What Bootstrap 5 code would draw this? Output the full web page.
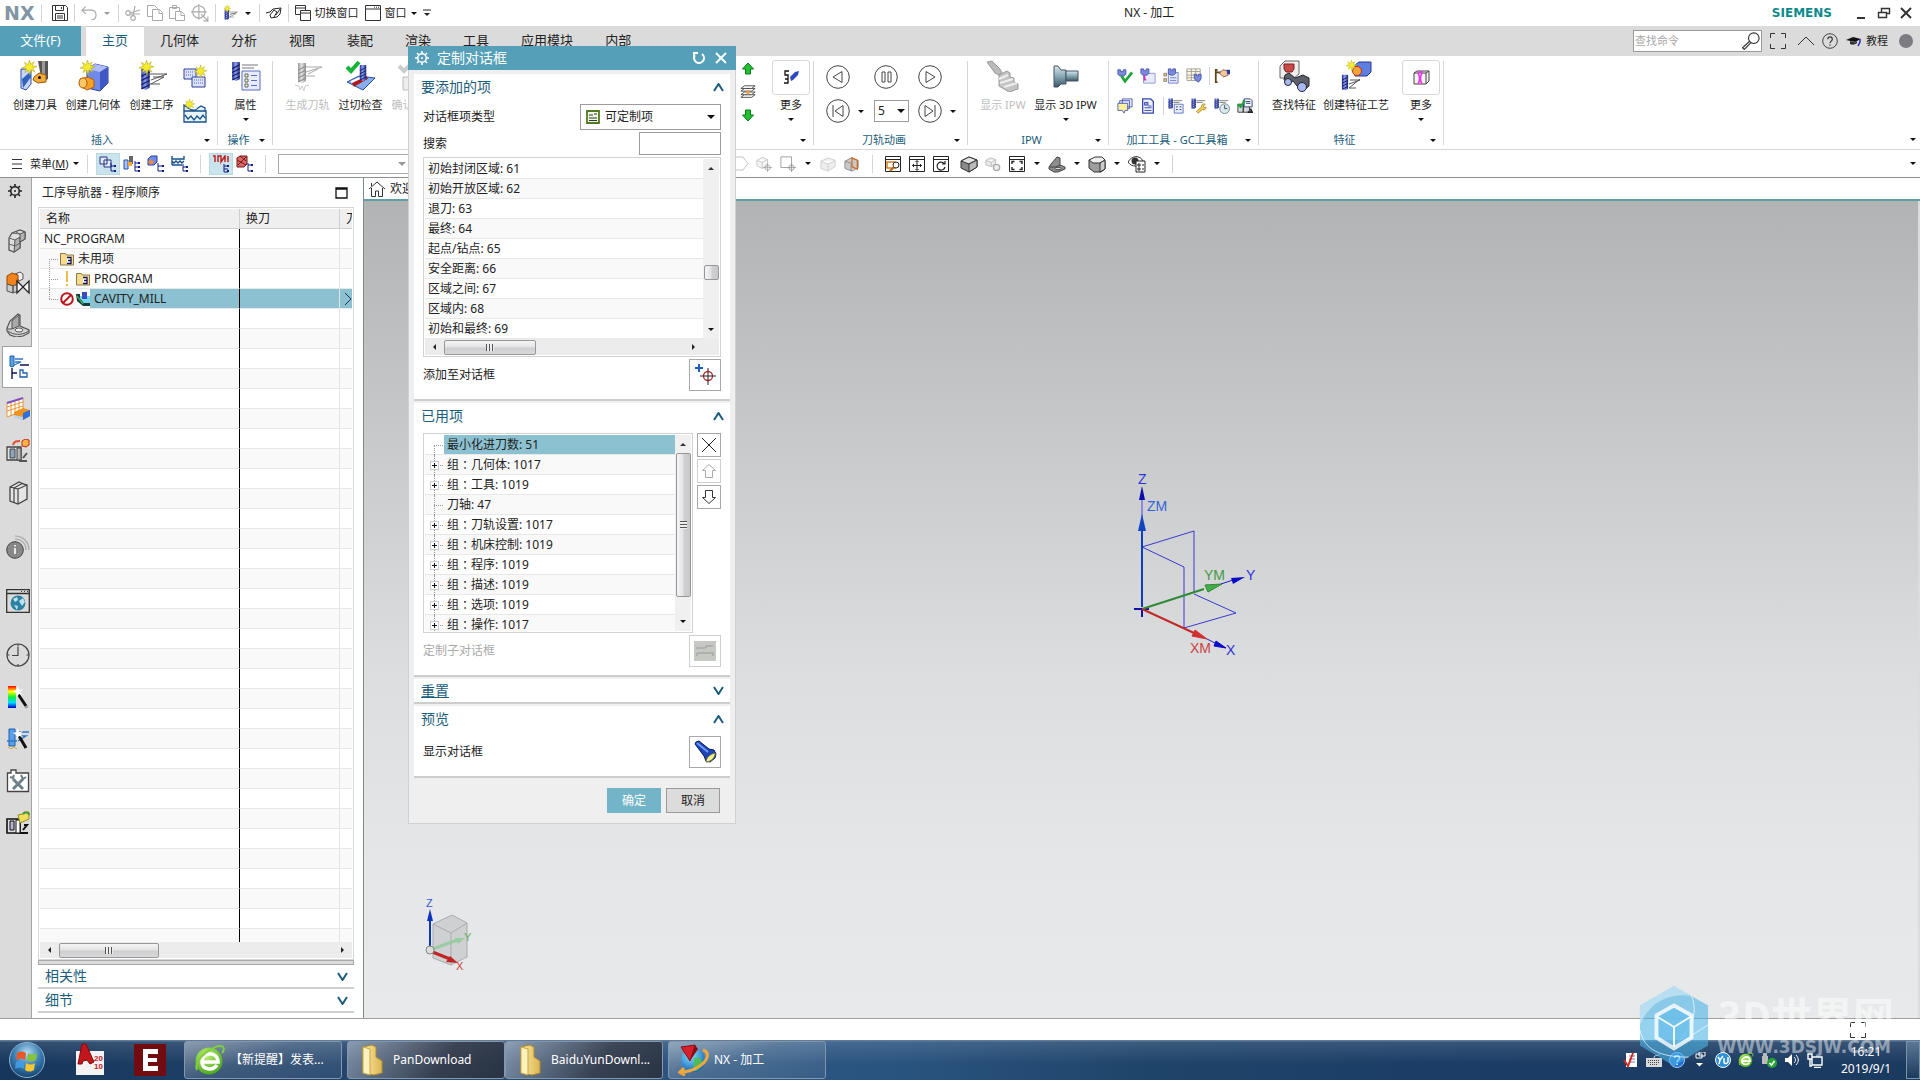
<!DOCTYPE html>
<html lang="zh-CN">
<head>
<meta charset="utf-8">
<meta name="viewport" content="width=device-width, initial-scale=1">
<title>NX - 加工</title>
<link href="https://cdn.jsdelivr.net/npm/bootstrap@5.3.0/dist/css/bootstrap.min.css" rel="stylesheet">
<style>
:root{--teal:#559fb8;--ink:#1b5e7b;--pick:#8bc1d0;--line:#d6d6d6}
body{font-family:"Noto Sans","Noto Sans CJK SC",sans-serif;font-size:12px;line-height:20px;color:#222;background:#fff;overflow:hidden}
button,input,select{font:inherit;color:inherit}
.btn{--bs-btn-padding-x:0;--bs-btn-padding-y:0;--bs-btn-font-size:12px;--bs-btn-line-height:16px;--bs-btn-border-width:0;--bs-btn-border-radius:0;--bs-btn-color:#222;--bs-btn-disabled-color:#bdbdbd;--bs-btn-disabled-opacity:1;font-family:inherit}
svg{display:block;flex:none}
.i14{width:14px;height:14px}.i16{width:16px;height:16px}.i18{width:18px;height:18px}.i24{width:24px;height:24px}.i32{width:32px;height:32px}
.fs11{font-size:11px;line-height:16px}
.tri{width:0;height:0;border:3px solid transparent;border-top-color:#111;border-bottom:0;flex:none}
.tri.up{border:3px solid transparent;border-bottom-color:#333;border-top:0}
.tri.lf{border:3px solid transparent;border-right-color:#222;border-left:0}
.tri.rt{border:3px solid transparent;border-left-color:#222;border-right:0}
.tri.dim{border-top-color:#999}
.vsep{width:1px;height:18px;background:#d4d4d4;flex:none}
.titlebar,.tabrow,.ribbon,.selbar,.statusbar,.taskbar{flex-shrink:0}
/* title bar */
.titlebar{height:26px;gap:6px}
.titlebar > .tri{margin:0 2px 0 1px}
.nxlogo{font:bold 19px/26px "DejaVu Sans",sans-serif;color:#8195a5}
.siemens{font:bold 12px/28px "DejaVu Sans",sans-serif;color:#0d8a8c}
/* ribbon tabs */
.tabrow{height:30px;background:#dbdbdb}
.tabrow .nav-link{font-size:13px;line-height:28px;padding:0 16px 2px;color:#222;border-radius:0}
.tabrow .nav-link.filetab{background:var(--teal);color:#fff;width:81px;text-align:center;padding:0 0 2px;margin-right:5px}
.tabrow .nav-link.active{background:#fff;color:var(--ink);border-top:1px solid #ccc;line-height:27px}
.findbox{width:129px;height:22px;border:1px solid #9a9a9a;background:#fff}
.findbox input{width:104px;border:0;background:none;padding:0 1px;outline:0}
.findbox input::placeholder{color:#a8a8a8}
/* ribbon */
.ribbon{height:94px;border-bottom:1px solid var(--line)}
.rgroup{position:relative;display:flex;flex-direction:column;padding-top:4px}
.rgroup::after{content:"";position:absolute;right:0;top:5px;bottom:4px;width:1px;background:var(--line)}
.rbody{flex:1;display:flex;align-items:flex-start}
.rfoot{display:flex;align-items:center;height:18px;padding-right:8px;color:var(--ink)}
.rfoot span:first-child{flex:1;text-align:center}
.rbtn{display:flex;flex-direction:column;align-items:center;font-size:11px;line-height:16px;white-space:nowrap;height:68px}
.rbtn .cap{margin-top:5px}
.rbtn .tri{margin-top:5px}
.morebox{width:38px;height:35px;border:1px solid #d8d8d8;border-radius:3px;display:flex;align-items:center;justify-content:center}
.rbtn .morebox + .cap{margin-top:2px}
.stackcol{gap:10px;padding:5px 0 0 4px}
.layercol{gap:8px;padding-top:2px}
.g-ins{width:218px}.g-op{width:55px}.g-path{width:541px}.g-anim{width:154px}.g-ipw{width:141px}.g-gc{width:150px}.g-feat{width:185px}
.anim{display:grid;grid-template-columns:48px 44px 44px;align-content:start;align-items:center;row-gap:10px;padding:5px 0 0 12px}
.anim select{width:35px;height:22px}
.cell{width:23px;height:24px;display:flex;align-items:center;justify-content:center;flex:none}
.plainselect{appearance:none;border:1px solid #9c9c9c;border-radius:0;background:#fff;padding:0 3px;outline:0}
.selwrap{position:relative}
.selwrap .tri{position:absolute;right:8px;top:50%;margin-top:-2px;border-width:4px 4px 0;pointer-events:none}
.anim .selwrap .tri{right:4px}
.anim .selwrap{width:35px}
.selwrap .kind + .kindico + .tri{right:6px}
/* selection bar */
.selbar{height:28px;border-bottom:1px solid #8f8f8f}
.tcell{width:24px;height:22px;display:flex;align-items:center;justify-content:center;flex:none}
.tarr{width:15px;display:flex;justify-content:center;flex:none}
.tarr + .tcell{margin-left:1px}
.tcell.on{background:#cbe4eb;border:1px solid #b9dae4}
.selleft{width:728px}
.filterbox{height:20px;width:136px;border:1px solid #aaa}
/* work area */
.workarea{flex:1 1 0;min-height:0}
.sidebar{width:32px;background:#dbdbdb;border-right:1px solid #a2a2a2}
.sidebar .btn{width:32px;height:42px;display:flex;align-items:center;justify-content:center;padding-left:4px;flex-shrink:0}
.sidebar .btn.gearbtn{height:26px;margin-bottom:16px;padding:0;width:30px}
.sidebar .btn.on{background:#fff;border:1px solid #a2a2a2;border-right:0;width:30px;margin-left:2px;padding-left:2px}
.sidebar .far{margin-top:12px}
.navpanel{width:332px;border-right:1px solid #7e8a8d;padding:0 9px 5px 6px}
.navhead{padding:5px 6px 4px 4px}
.navframe{border:1px solid #d6d6d6;padding:1px;flex:1 1 0;min-height:0}
.navscroll{flex:1 1 0;min-height:0;overflow:hidden}
.navtable{table-layout:fixed;width:312px;margin:0;border-collapse:separate;border-spacing:0}
.navtable th{height:20px;font-weight:400;background:#efefef;border-bottom:1px solid #cfcfcf;border-right:1px solid #cfcfcf;padding:0 6px;line-height:19px;overflow:hidden;white-space:nowrap}
.navtable td{height:20px;padding:0;border-bottom:1px solid #e8e8e8;border-right:1px solid #e4e4e4;line-height:19px;overflow:hidden;white-space:nowrap}
.navtable td:first-child{border-right:1px solid #000}
.navtable td:last-child,.navtable th:last-child{border-right:0}
.navtable tr:nth-child(even) td{background:#f9f9f9}
.navtable tr.picked td:not(:first-child),.picklabel{background:var(--pick)!important}
.twig{width:11px;height:19px;position:relative;margin-left:9px;flex:none}
.twig::before{content:"";position:absolute;left:0;top:0;bottom:0;border-left:1px dotted #999}
.twig::after{content:"";position:absolute;left:0;top:10px;width:9px;border-top:1px dotted #999}
.twig.first::before{top:10px}.twig.last::before{bottom:9px}
.opicons{display:flex;gap:2px}
.hbar{height:16px;background:#ececec;display:flex;align-items:center;flex-shrink:0}
.thumb{border:1px solid #979797;border-radius:2px;background:linear-gradient(#f5f5f5,#e4e4e6 45%,#cfcfd2 55%,#d9d9dc);display:flex;align-items:center;justify-content:center}
.thumb.v{background:linear-gradient(90deg,#f5f5f5,#e4e4e6 45%,#cfcfd2 55%,#c9c9cc)}
.grip{width:8px;height:7px;background:repeating-linear-gradient(90deg,#555 0 1px,#eee 1px 3px)}
.thumb.v .grip{width:7px;height:8px;background:repeating-linear-gradient(#555 0 1px,#eee 1px 3px)}
.splitbar{height:5px;background:#dcdcdc;border:1px solid #a8a8a8;flex-shrink:0}
.fold{height:24px;flex-shrink:0;border:0;border-bottom:2px solid #d0d0d0;background:none;color:var(--ink);font-size:14px;line-height:20px;display:flex;justify-content:space-between;align-items:center;padding:0 6px 0 7px}
.chev{width:11px;height:9px;fill:none;stroke:var(--ink);stroke-width:2}
/* graphics window */
.viewtab{height:23px;flex-shrink:0;border-bottom:2px solid #5f9ea7;background:#fff}
.canvas3d{background:linear-gradient(#b2b3b5,#c9cbcc 32%,#dcdddf 57%,#e4e6e7 80%,#e7e9ea);border-right:2px solid #dadcdd}
.triad{position:absolute;left:768px;top:256px}
.viewcube{position:absolute;left:57px;bottom:46px}
.axis{font-family:"Liberation Sans",sans-serif}
/* dialog */
.dlg{position:absolute;left:408px;top:46px;width:328px;background:#efefef;border:1px solid #cfd2d3;border-top:0;z-index:5}
.dlgtitle{height:24px;margin:0 -1px;background:var(--teal);color:#fff;font-size:14px;padding:0 8px 0 7px}
.sect{margin:2px 5px 0;background:#fff;border-bottom:2px solid #cdcdcd;padding:0 9px 8px}
.sect.topmost{margin-top:4px}
.sect.closed{padding-bottom:0}
.secthead{height:26px;width:calc(100% + 5px);margin-left:-2px;display:flex;justify-content:space-between;align-items:center;border:0;background:none;color:var(--ink);font-size:14px;padding:0}
.closed .secthead{height:23px}
.lrow{display:flex;justify-content:space-between;align-items:center}
.lrow.kindrow{padding:4px 0 2px}
.kind{width:141px;height:26px;padding-left:24px}
.kindico{position:absolute;left:6px;top:6px;pointer-events:none}
.term{width:82px;height:23px;border:1px solid #9c9c9c;outline:0;padding:0 4px}
.listframe{border:1px solid #d2d2d2;padding:1px;height:200px}
.itemlist{margin:2px 0}
.itemlist > .d-flex{height:180px}
.treewrap{padding-top:4px;margin-bottom:2px}
.rows{list-style:none;margin:0;padding:0;overflow:hidden}
.rows li{height:20px;line-height:19px;border-bottom:1px solid #e8e8e8;padding-left:3px;white-space:nowrap;display:flex}
.rows li:nth-child(even){background:#f9f9f9}
.rows .picklabel{padding-left:3px}
.tree .node{margin-right:3px}
.tree .node.first{margin-right:0}
.co{font-family:"Noto Sans CJK TC",sans-serif}
.vbar{width:16px;background:#f0f0f0;display:flex;flex-direction:column;align-items:center;flex:none}
.sqbtn{width:32px;height:32px;border:1px solid #a8a8a8!important;display:flex;align-items:center;justify-content:center;background:#fff}
.sqbtn.sm24{width:24px;height:24px}
.sqbtn:disabled{border-color:#cfcfcf!important;background:#fff}
.node{position:relative;width:10px;height:20px;margin:0 0 0 6px;flex:none}
.node::before{content:"";position:absolute;left:0;top:0;bottom:0;border-left:1px dotted #999}
.node::after{content:"";position:absolute;left:0;top:10px;width:9px;border-top:1px dotted #999}
.node.first::before{top:10px}
.plus{position:absolute;left:-4px;top:6px;z-index:1;width:9px;height:9px;background:#fff;border:1px solid #ccc}
.plus::before,.plus::after{content:"";position:absolute;background:#111}
.plus::before{left:1px;top:3px;width:5px;height:1px}.plus::after{left:3px;top:1px;width:1px;height:5px}
.dlgfoot{padding:10px 15px;gap:5px}
.okbtn{width:54px;height:25px;background:#73b4c8!important;color:#fff!important}
.nobtn{width:54px;height:25px;background:#dcdcdc!important;border:1px solid #9b9b9b!important}
/* status and task bars */
.statusbar{height:22px;border-top:1px solid #9f9f9f;padding-right:54px}
.taskbar{height:40px;background:linear-gradient(#5f7c9b 0 1px,rgba(255,255,255,.12) 2px,rgba(255,255,255,0) 60%),linear-gradient(90deg,#16365b,#24466e 20%,#2d5680 38%,#2a5480 46%,#1f4469 60%,#1b3d66 75%,#1b3a60);color:#fff}
.task{width:158px;height:38px;flex-shrink:0;border:1px solid #8497ad;border-radius:3px;background:linear-gradient(160deg,rgba(255,255,255,.42),rgba(255,255,255,.14) 45%,rgba(255,255,255,.05));color:#fff!important;display:flex;align-items:center;text-align:left;padding-left:9px}
.task svg{width:32px;height:32px;margin-right:4px}
.task.gapped{margin-left:5px}
.task.dark{background:linear-gradient(125deg,rgba(255,255,255,.4),rgba(60,60,70,.75) 60%,rgba(40,45,55,.8))}
.tasks{margin-left:18px}
.ticon{width:23px;display:flex;justify-content:center}
.clock{width:80px;line-height:17px;text-align:center}
.desk{width:14px;height:38px;border:1px solid #7b93ad;background:linear-gradient(#5d7896,#1b3a5c)}
.wmark{position:absolute;right:26px;bottom:13px;z-index:9;pointer-events:none;color:#fff}
.wmark .big{font:bold 41px/42px "Noto Sans CJK SC",sans-serif;opacity:.5}
.wmark .url{font:bold 17px/24px "DejaVu Sans",sans-serif;opacity:.45}
</style>
</head>
<body>
<svg width="0" height="0" class="position-absolute" aria-hidden="true">
<defs>
<linearGradient id="gm" x1="0" x2="1"><stop offset="0" stop-color="#24309a"/><stop offset=".45" stop-color="#8fa2f0"/><stop offset="1" stop-color="#1c2678"/></linearGradient>
<linearGradient id="gg" x1="0" x2="1"><stop offset="0" stop-color="#9a9a9a"/><stop offset=".45" stop-color="#e2e2e2"/><stop offset="1" stop-color="#909090"/></linearGradient>
<linearGradient id="gs" x1="0" x2="0" y1="0" y2="1"><stop offset="0" stop-color="#d8e6ec"/><stop offset=".5" stop-color="#86a7b5"/><stop offset="1" stop-color="#3a5564"/></linearGradient>
<linearGradient id="rainbow" x1="0" x2="0" y1="0" y2="1"><stop offset="0" stop-color="#f00"/><stop offset=".25" stop-color="#ff0"/><stop offset=".5" stop-color="#1e3"/><stop offset=".75" stop-color="#0df"/><stop offset="1" stop-color="#00c"/></linearGradient>
<linearGradient id="gf" x1="0" x2="1"><stop offset="0" stop-color="#fbe9a4"/><stop offset="1" stop-color="#dcb650"/></linearGradient>
<radialGradient id="orb" cx=".5" cy=".3" r=".75"><stop offset="0" stop-color="#b7dcf3"/><stop offset=".5" stop-color="#3c7fb4"/><stop offset="1" stop-color="#0e3c68"/></radialGradient>
<radialGradient id="ball" cx=".4" cy=".3" r=".75"><stop offset="0" stop-color="#8de0ff"/><stop offset="1" stop-color="#0a62b4"/></radialGradient>
<radialGradient id="grn" cx=".4" cy=".3" r=".8"><stop offset="0" stop-color="#c3ef72"/><stop offset="1" stop-color="#3d9f16"/></radialGradient>
</defs>
<symbol id="star" viewBox="0 0 16 16"><path d="M8 0l1.3 4.4L13 2l-2 4 5 1-4.700 1.700L14 13l-4.300-2.500L8.500 16 7 10.800 3 13.500 5 9.500 0 8.500l4.500-2L2.500 2.500 6.500 5z" fill="#f6ec2e" stroke="#b5a81c" stroke-width=".6"/></symbol>
<symbol id="mill" viewBox="0 0 10 22"><path d="M1 1h8v18l-4 2-4-2z" fill="url(#gm)"/><path d="M1 8l8-4M1 12l8-4M1 16l8-4M1 20l8-4" stroke="#151d66" stroke-width="1.200"/></symbol>
<symbol id="millg" viewBox="0 0 10 22"><path d="M1 1h8v18l-4 2-4-2z" fill="url(#gg)"/><path d="M1 8l8-4M1 12l8-4M1 16l8-4M1 20l8-4" stroke="#888"/></symbol>
<symbol id="i-tool" viewBox="0 0 32 32"><path d="M19 1h10v18l-6 3z" fill="#555"/><path d="M23 1h3v18h-3z" fill="#999"/><path d="M15 17l5-4 7 2v7l-8 1-5-3z" fill="#f3a93c" stroke="#9a5b0c"/><circle cx="20.500" cy="17.500" r="1.500" fill="#111"/><path d="M2 9h10v15l-5 6-5-2z" fill="#c9d6ff" stroke="#2b4da8"/><path d="M3 19l9-8v6L4 28z" fill="#2f63c0"/><use href="#star" x="3" y="0" width="15" height="15"/></symbol>
<symbol id="i-geom" viewBox="0 0 32 32"><path d="M10 9l8-5 13 3v16l-8 8-13-3z" fill="#6f8bea" stroke="#2a3f9c"/><path d="M10 9l8-5 13 3-8 5z" fill="#aebdf8"/><path d="M23 12v18l8-7V7z" fill="#4058c4"/><path d="M3 19l8-2 6 3v7l-7 3-7-4z" fill="#f5a22c" stroke="#b05b06"/><ellipse cx="6" cy="23" rx="4" ry="5" fill="#ffc765" stroke="#b05b06"/><use href="#star" x="3" y="0" width="15" height="15"/></symbol>
<symbol id="i-op" viewBox="0 0 32 32"><use href="#mill" x="4" y="8" width="11" height="23"/><path d="M14 14h17L15 20M17 17h11M15 24l13-7M14 24h10" stroke="#555" fill="none"/><use href="#star" x="3" y="0" width="15" height="15"/></symbol>
<symbol id="i-tile" viewBox="0 0 24 24"><path d="M1 4h12v10H1z" fill="#dbe2fb" stroke="#2b3c96"/><path d="M9 12h13v10H9z" fill="#dbe2fb" stroke="#2b3c96"/><path d="M3 7h8M3 10h8M11 15h9M11 18h9" stroke="#5668c4" stroke-dasharray="1 1"/><use href="#star" x="11" y="0" width="13" height="13"/></symbol>
<symbol id="i-wave" viewBox="0 0 24 24"><path d="M1 12V6l4 3c4 3 8 3 10 0l3-2 4 2v3" fill="#e8f4fb" stroke="#16508a" stroke-width="1.300"/><path d="M1 12h22v11H1zM2 16l3 4 3-3 3 4 3-4 3 3 3-4 2 3" fill="#e8f4fb" stroke="#16508a" stroke-width="1.300"/><use href="#star" x="1" y="0" width="11" height="11"/></symbol>
<symbol id="i-prop" viewBox="0 0 32 32"><use href="#mill" x="1" y="1" width="10" height="21"/><path d="M12 5h16M12 8h12" stroke="#777"/><path d="M12 11h18v19H12z" fill="#e8ecff" stroke="#5a6cc0"/><path d="M15 14h3v3h-3zM15 19h3v3h-3zM15 24h3v3h-3z" fill="#fff5b8" stroke="#666"/><path d="M21 15.500h6M21 20.500h6M21 25.500h6" stroke="#5a6cc0"/></symbol>
<symbol id="i-gen" viewBox="0 0 32 32"><use href="#millg" x="5" y="2" width="10" height="22"/><path d="M14 7h16L14 12M16 14l10-5M14 16h9" stroke="#aaa" fill="none"/><path d="M3 25l4 1 1 4 2-4 2 5 1-5 4-1" stroke="#ccc" fill="none"/></symbol>
<symbol id="i-check" viewBox="0 0 32 32"><path d="M2 22l12-6 16 2-12 12z" fill="#86aef0" stroke="#2a50a0"/><path d="M8 25l14-8" stroke="#b01a1a" stroke-width="4"/><path d="M6 22l14-6" stroke="#fff" stroke-width="2"/><use href="#mill" x="14" y="4" width="8" height="18"/><path d="M2 7l4 4 8-9" stroke="#16b438" stroke-width="4" fill="none"/></symbol>
<symbol id="i-conf" viewBox="0 0 32 32"><path d="M1 6l5 5 9-9" stroke="#ccc" stroke-width="4" fill="none"/><path d="M5 17h14v13H5z" fill="#eee" stroke="#bbb"/></symbol>
<symbol id="i-upg" viewBox="0 0 14 14"><path d="M7 1l5.500 6H9.500v5h-5V7H1.500z" fill="#1fc032" stroke="#0d7a1c"/></symbol>
<symbol id="i-dng" viewBox="0 0 14 14"><path d="M7 13L1.500 7h3V2h5v5h3z" fill="#1fc032" stroke="#0d7a1c"/></symbol>
<symbol id="i-stack" viewBox="0 0 18 18"><g fill="#fff" stroke="#444"><path d="M1 15l4-3h12l-4 3z"/><path d="M1 12l4-3h12l-4 3z"/><path d="M1 8l4-3h12l-4 3z"/><path d="M1 5l4-3h12l-4 3z"/></g><path d="M6 9l3 3 3-3-3-2z" fill="#e8a04a"/></symbol>
<symbol id="i-more1" viewBox="0 0 18 18"><path d="M7 2H3v4h3v4H3M6 10v4H2" stroke="#111" stroke-width="1.300" fill="none"/><path d="M8 8l5-5 4-1-1 4-5 5-2 1z" fill="#2d49b8"/></symbol>
<symbol id="i-cback" viewBox="0 0 24 24"><circle cx="12" cy="12" r="11.300" fill="#fff" stroke="#444"/><path d="M16 6.500v11L7 12z" fill="none" stroke="#444"/></symbol>
<symbol id="i-cpause" viewBox="0 0 24 24"><circle cx="12" cy="12" r="11.300" fill="#fff" stroke="#444"/><path d="M8 7h3v10H8zM14 7h3v10h-3z" fill="none" stroke="#444"/></symbol>
<symbol id="i-cplay" viewBox="0 0 24 24"><circle cx="12" cy="12" r="11.300" fill="#fff" stroke="#444"/><path d="M8 6.500v11l9-5.500z" fill="none" stroke="#444"/></symbol>
<symbol id="i-cfirst" viewBox="0 0 24 24"><circle cx="12" cy="12" r="11.300" fill="#fff" stroke="#444"/><path d="M7 6v12M17 6.500v11L9 12z" fill="none" stroke="#444"/></symbol>
<symbol id="i-clast" viewBox="0 0 24 24"><circle cx="12" cy="12" r="11.300" fill="#fff" stroke="#444"/><path d="M17 6v12M7 6.500v11l8-5.500z" fill="none" stroke="#444"/></symbol>
<symbol id="i-ipw" viewBox="0 0 32 32"><path d="M0 2l5-1 8 8 2 4-3 2-4-2z" fill="#bbb" stroke="#999"/><path d="M12 15l8-4 3 2v4l4 1v4l4 2v5l-9 3-10-6z" fill="#c4c4c4" stroke="#999"/><path d="M12 19l9-4M13 23l13-4M17 27l13-4" stroke="#eee" stroke-width="2"/></symbol>
<symbol id="i-3d" viewBox="0 0 32 32"><path d="M4 6h4l3 4h5v14h-5l-3 3H4z" fill="url(#gs)" stroke="#456"/><path d="M16 11h12v10H16z" fill="url(#gs)" stroke="#456"/></symbol>
<symbol id="g-chk" viewBox="0 0 18 18"><path d="M1 2h3v2h3V2h3v5L8 9H3L1 7z" fill="#7c8be0" stroke="#4654a8"/><path d="M5 9l4 6 8-10" stroke="#19a53a" stroke-width="3" fill="none"/></symbol>
<symbol id="g-box" viewBox="0 0 18 18"><path d="M4 6h13v11H4z" fill="#e9ebfa" stroke="#8b93cc"/><path d="M1 1h3v2h3V1h3v5L8 8H3L1 6z" fill="#7c8be0" stroke="#4654a8"/><path d="M5 8v5h2" stroke="#c43ac4" stroke-width="2" fill="none"/></symbol>
<symbol id="g-tree" viewBox="0 0 18 18"><path d="M6 5h11v12H6z" fill="#e3e8fb" stroke="#6b78c4"/><path d="M6 1h3v2h2V1h3v5l-2 2H8L6 6z" fill="#7c8be0" stroke="#4654a8"/><path d="M1 6h3v3H1zM1 12h3v3H1z" fill="#f0d36a" stroke="#877"/><path d="M8 11h7M8 14h7" stroke="#6b78c4"/></symbol>
<symbol id="g-grid" viewBox="0 0 18 18"><path d="M1 1h15v13H1zM1 4h15M1 8h15M1 11h15M6 1v13M11 1v13" fill="#fffbe0" stroke="#999"/><path d="M9 7h3v2h2V7h3v5l-3 4-4-3z" fill="#7c8be0" stroke="#4654a8"/></symbol>
<symbol id="g-hand" viewBox="0 0 18 18"><path d="M2 1v15M1 2h3M1 16h3M3 5h5" stroke="#5a4618" stroke-width="2" fill="none"/><path d="M6 6l4-4 5 1 1 5-5 2z" fill="#f3c892" stroke="#855"/><path d="M14 2h4v5h-3z" fill="#2a3da8"/></symbol>
<symbol id="g-msg" viewBox="0 0 18 18"><path d="M6 1h11v9H6zM3 3h11v9H3z" fill="#e4e8fb" stroke="#4b5ab0"/><path d="M1 6h11v8H9l-1 3-2-3H1z" fill="#f9f0a0" stroke="#4b5ab0"/></symbol>
<symbol id="g-doc" viewBox="0 0 18 18"><path d="M3 1h9l3 3v13H3z" fill="#eef0ff" stroke="#3444a4" stroke-width="1.400"/><path d="M5 5h4v3H5zM9 9h4M5 11h8M5 14h8" stroke="#3444a4" fill="#99a5e8"/></symbol>
<symbol id="g-ml" viewBox="0 0 18 18"><use href="#mill" x="0" y="0" width="6" height="13"/><path d="M6 3h10M6 5h7" stroke="#777"/><path d="M7 7h10v10H7z" fill="#e8ecff" stroke="#5a6cc0"/><path d="M9 10h2M13 10h2M9 13h2M13 13h2" stroke="#333"/></symbol>
<symbol id="g-mw" viewBox="0 0 18 18"><use href="#mill" x="0" y="0" width="6" height="13"/><path d="M6 3h10M6 5h7" stroke="#777"/><path d="M6 15l6-5c-1-3 2-4 4-3l-2 2 1 2 2-1c0 3-2 4-4 3l-5 4z" fill="#f2cb52" stroke="#946d10" stroke-width=".7"/></symbol>
<symbol id="g-mc" viewBox="0 0 18 18"><use href="#mill" x="0" y="0" width="6" height="13"/><path d="M6 3h10M6 5h7" stroke="#777"/><circle cx="12" cy="12" r="5.500" fill="#dde8ec" stroke="#68808a"/><path d="M12 8v4h3" stroke="#345" fill="none"/></symbol>
<symbol id="g-mach" viewBox="0 0 18 18"><path d="M1 7h6v9H1zM7 3h7v13H7z" fill="#d8dade" stroke="#333"/><path d="M8 1h7l2 2v7H8z" fill="#f6f8ff" stroke="#26346f"/><path d="M10 4h5M10 6h5" stroke="#26346f"/><path d="M1 7l3 3 5-7" stroke="#19a53a" stroke-width="2.500" fill="none"/><path d="M12 16h5l-2-4" stroke="#222" stroke-width="2" fill="none"/></symbol>
<symbol id="i-find" viewBox="0 0 32 32"><path d="M2 6l5-5h14v13l-5 4H2z" fill="#eee" stroke="#666"/><path d="M6 4h10v5l-2 3H8L6 9z" fill="#c84b4b" stroke="#802020"/><path d="M7 15l4-2 6 5 8-3 6 3v8l-6 5-6-5-4-5-4 2-5-3z" fill="#5c6068" stroke="#222"/><circle cx="10" cy="22" r="3.500" fill="#aab8f0" stroke="#223"/><circle cx="24" cy="27" r="4.500" fill="#aab8f0" stroke="#223"/></symbol>
<symbol id="i-fproc" viewBox="0 0 32 32"><path d="M15 5l4-3h12v10l-4 4H15z" fill="#5f7fe0" stroke="#24388c"/><circle cx="17" cy="11" r="4.500" fill="#f6a43a" stroke="#c02c10"/><use href="#star" x="6" y="0" width="11" height="11"/><use href="#mill" x="1" y="14" width="8" height="17"/><path d="M10 20h10L9 24M20 19L9 28M9 28h7" stroke="#555" fill="none"/></symbol>
<symbol id="i-more2" viewBox="0 0 18 18"><path d="M2 4l3-2h12v10l-3 3H2z" fill="#f4f4f4" stroke="#444"/><path d="M14 15V4H2M14 4l3-2" stroke="#444" fill="none"/><path d="M6 3h5M6 15c2-3 2-8 0-11M10 15c-2-3-2-8 0-11" stroke="#e23ade" stroke-width="1.600" fill="none"/></symbol>
<symbol id="i-save" viewBox="0 0 16 16"><path d="M.5.500h13l2 2v13H.500z" fill="none" stroke="#333"/><path d="M3.500.500v5h8v-5M9.500 2v2M3.500 15V8.500h9V15M5 11h6M5 13h6" fill="none" stroke="#333"/></symbol>
<symbol id="i-undo" viewBox="0 0 17 16"><path d="M5 1L1 5l4 4M1 5h9c4 0 6 2 6 5s-2 5-5 5" fill="none" stroke="#aaa" stroke-width="1.200"/></symbol>
<symbol id="i-cut" viewBox="0 0 16 16"><g fill="none" stroke="#aaa" stroke-width="1.200"><circle cx="3" cy="8" r="2.300"/><circle cx="8" cy="13" r="2.300"/><path d="M5 8l10-3M8 11L10 1M5 9h10"/></g></symbol>
<symbol id="i-copy" viewBox="0 0 16 16"><g fill="#fff" stroke="#aaa"><path d="M.5.500h7l3 3v8H.500z"/><path d="M5.500 4.500h7l3 3v8h-10zM12 4.500v4h3"/></g></symbol>
<symbol id="i-paste" viewBox="0 0 16 16"><g fill="#fff" stroke="#aaa"><path d="M.5 2.500h10v11H.500zM3.500.500h4v3h-4z"/><path d="M6.500 6.500h6l3 3v6h-9zM12 6.500v4h3"/></g></symbol>
<symbol id="i-tgt" viewBox="0 0 16 16"><g fill="none" stroke="#aaa"><circle cx="7" cy="7" r="5.500"/><path d="M7 0v14M0 7h14M9 9l6 6v-4M15 15h-4"/></g></symbol>
<symbol id="i-pen" viewBox="0 0 16 16"><path d="M0 8l4-1 3-3 8-1-1 6-3 3-6 1-1-3 4-5 3 2-3 5M10 10l4-6" fill="none" stroke="#222"/></symbol>
<symbol id="i-wins" viewBox="0 0 16 16"><path d="M.5.500h10v9H.500zM.500 3h10" fill="#fff" stroke="#333"/><path d="M5.500 5.500h10v10h-10zM5.500 8h10" fill="#fff" stroke="#333"/></symbol>
<symbol id="i-win" viewBox="0 0 16 16"><path d="M.5.500h15v15H.500zM.500 4h15" fill="#fff" stroke="#333"/><path d="M9 2.200h5" stroke="#333" stroke-dasharray="1 1"/></symbol>
<symbol id="i-max4" viewBox="0 0 16 16"><path d="M.5 5V.500H5M11 .500h4.500V5M15.500 11v4.500H11M5 15.500H.500V11" fill="none" stroke="#333"/></symbol>
<symbol id="i-help" viewBox="0 0 16 16"><circle cx="8" cy="8" r="7.300" fill="none" stroke="#444"/><path d="M5.700 6.200c0-3 4.600-3 4.600 0 0 2-2.300 1.800-2.300 4M8 11.500v1.300" stroke="#333" fill="none" stroke-width="1.200"/></symbol>
<symbol id="i-hat" viewBox="0 0 16 16"><path d="M0 7l7-3 8 2-6 3z" fill="#111"/><path d="M4 8v3c2 1 5 1 7-1V8L9 9.500z" fill="#333"/><path d="M14 6v3l-2 4" stroke="#2222b8" stroke-width="1.400" fill="none"/></symbol>
<symbol id="i-mag" viewBox="0 0 16 16"><circle cx="10.500" cy="5.500" r="4.700" fill="none" stroke="#333"/><path d="M7 8l-6.500 6 1.500 1.500L8 9.500" fill="none" stroke="#333"/></symbol>
<symbol id="i-gear" viewBox="0 0 14 14"><circle cx="7" cy="7" r="4.300" fill="none" stroke="currentColor" stroke-width="1.600"/><circle cx="7" cy="7" r="1" fill="currentColor"/><path d="M7 0v2.500M7 11.500V14M0 7h2.500M11.500 7H14M2 2l1.700 1.700M10.300 10.300L12 12M12 2l-1.700 1.700M3.700 10.300L2 12" stroke="currentColor" stroke-width="1.600"/></symbol>
<symbol id="t-a" viewBox="0 0 18 18"><path d="M1 2h7v7H1zM5 5h7v7H5z" fill="#e4eaff" stroke="#26347f"/><path d="M12 8v8M12 11h4M12 16h4" stroke="#0c1c88"/><path d="M15 10h2v2h-2zM15 15h2v2h-2z" fill="#0c1c88"/></symbol>
<symbol id="t-b" viewBox="0 0 18 18"><path d="M6 1h4v8H6z" fill="#666"/><path d="M1 5h4v9H1z" fill="#aac0ff" stroke="#2b4da8"/><path d="M5 7h4v4H5z" fill="#f3a93c"/><path d="M12 6v10M12 8h4M12 12h4M12 16h4" stroke="#0c1c88"/><path d="M15 7h2v2h-2zM15 11h2v2h-2zM15 15h2v2h-2z" fill="#0c1c88"/></symbol>
<symbol id="t-c" viewBox="0 0 18 18"><path d="M1 4l3-3h6v6l-3 3H1z" fill="#6f8bea" stroke="#2a3f9c"/><circle cx="4" cy="7" r="2.500" fill="#e88a4a"/><path d="M11 8v8M11 11h4M11 16h4" stroke="#0c1c88"/><path d="M15 10h2v2h-2zM15 15h2v2h-2z" fill="#0c1c88"/></symbol>
<symbol id="t-d" viewBox="0 0 18 18"><path d="M1 1v3h12V1M1 10V6l2 2 2-2 2 2 2-2 2 2 2-2M1 10h10" fill="none" stroke="#16508a" stroke-width="1.400"/><path d="M12 9v7M12 12h4M12 16h4" stroke="#0c1c88"/><path d="M15 11h2v2h-2zM15 15h2v2h-2z" fill="#0c1c88"/></symbol>
<symbol id="t-e" viewBox="0 0 18 18"><path d="M1 1h2v6M6 7V1h3v6l4-6v6M16 7V1" fill="none" stroke="#c01818" stroke-width="1.400"/><path d="M12 9v8M12 11h4M12 17h4M12 14h4" stroke="#0c1c88"/><path d="M15 10h2v2h-2zM15 15h2v2h-2z" fill="#0c1c88"/></symbol>
<symbol id="t-f" viewBox="0 0 18 18"><path d="M1 3l3-2h7v8l-3 3H1z" fill="#d46a6a" stroke="#7d1515"/><path d="M1 5l9 5M4 1l6 5M2 10l8-8" stroke="#7d1515"/><path d="M12 8v8M12 10h4M12 16h4" stroke="#0c1c88"/><path d="M15 9h2v2h-2zM15 15h2v2h-2z" fill="#0c1c88"/></symbol>
<symbol id="t-hex" viewBox="0 0 18 18"><path d="M1 2h11l5 6.500L12 15H1z" fill="none" stroke="#c4c4c4"/></symbol>
<symbol id="t-cube" viewBox="0 0 18 18"><path d="M1 5l6-3.500L13 4v7l-6 3-6-3zM1 5l6 2 6-3M7 7v7" fill="#f6f6f6" stroke="#c4c4c4"/><circle cx="13" cy="13" r="3" fill="none" stroke="#aaa"/><path d="M13 8v10M8 13h10" stroke="#aaa"/></symbol>
<symbol id="t-sq" viewBox="0 0 18 18"><path d="M1 1h12v12H1z" fill="none" stroke="#999"/><circle cx="13" cy="13" r="3" fill="none" stroke="#999"/><path d="M13 8v10M8 13h10" stroke="#999"/></symbol>
<symbol id="t-cg" viewBox="0 0 18 18"><path d="M1 6l8-4 8 3v7l-8 5-8-3zM1 6l8 3 8-4M9 9v8" fill="#eee" stroke="#ccc"/></symbol>
<symbol id="t-co" viewBox="0 0 18 18"><path d="M1 6l7-4 8 3v8l-7 4-8-3z" fill="#c9c9c9" stroke="#888"/><path d="M1 6l7 2v9" stroke="#888" fill="none"/><path d="M9 2v10l6 3V5z" fill="none" stroke="#d06a20" stroke-width="1.400"/></symbol>
<symbol id="t-wz" viewBox="0 0 18 18"><path d="M1.500 1.500h15v15h-15zM1.500 4.500h15" fill="#fff" stroke="#222"/><path d="M3 7h8v6H3z" fill="none" stroke="#d87c1c" stroke-width="1.500"/><circle cx="12" cy="10" r="3" fill="#fff" stroke="#222"/><path d="M10 12l-4 4" stroke="#b86a10" stroke-width="2"/></symbol>
<symbol id="t-wm" viewBox="0 0 18 18"><path d="M1.500 1.500h15v15h-15zM1.500 4.500h15" fill="#fff" stroke="#222"/><path d="M9 6v9M4.500 10.500h9M7.500 7L9 5.500 10.500 7M7.500 14L9 15.500l1.500-1.500M6 9l-1.500 1.500L6 12M12 9l1.500 1.500L12 12" stroke="#222" fill="none"/></symbol>
<symbol id="t-wr" viewBox="0 0 18 18"><path d="M1.500 1.500h15v15h-15zM1.500 4.500h15" fill="#fff" stroke="#222"/><path d="M12.500 9a4 4 0 1 0 .5 3M13 6v3h-3" stroke="#222" fill="none" stroke-width="1.200"/></symbol>
<symbol id="t-wf" viewBox="0 0 18 18"><path d="M1.500 1.500h15v15h-15zM1.500 4.500h15" fill="#fff" stroke="#222"/><path d="M4 9V6.500h2.500M11.500 6.500H14V9M14 12v2.500h-2.500M6.500 14.500H4V12" stroke="#222" fill="none" stroke-width="1.400"/></symbol>
<symbol id="t-solid" viewBox="0 0 18 18"><path d="M1 6l8-4 8 3v7l-8 5-8-4z" fill="#8a8a8a" stroke="#333"/><path d="M1 6l8-4 8 3-8 4z" fill="#e4e4e4" stroke="#333"/><path d="M9 9v8l8-5V5z" fill="#bbb" stroke="#333"/></symbol>
<symbol id="t-cgear" viewBox="0 0 18 18"><path d="M1 5l5-3 6 2v5l-5 3-6-2zM1 5l6 2 5-3M7 7v5" fill="#e8e8e8" stroke="#bbb"/><circle cx="13" cy="13" r="3.500" fill="#eee" stroke="#aaa" stroke-width="1.500"/></symbol>
<symbol id="t-brk" viewBox="0 0 18 18"><path d="M1 12l2-3 6-7 3 1v7l5 2v2l-7 3H6l-5-3z" fill="#8d8d8d" stroke="#444"/><path d="M2 12h6l4-2" stroke="#444" fill="none"/><ellipse cx="10" cy="13.500" rx="3" ry="1.300" fill="#ddd" stroke="#444"/></symbol>
<symbol id="t-cyl" viewBox="0 0 18 18"><path d="M1 5v8l5 4h7l4-3V6z" fill="#9d9d9d" stroke="#333"/><path d="M1 5l6-3h7l3 3-5 3H5z" fill="#eee" stroke="#333"/><path d="M12 8v9l5-3V5z" fill="#ccc" stroke="#333"/></symbol>
<symbol id="t-eye" viewBox="0 0 18 18"><path d="M0 7c4-7 12-7 15-1-4 6-11 7-15 1z" fill="#fff" stroke="#333"/><circle cx="7" cy="6" r="3.500" fill="#333"/><path d="M8 6h9v11H8z" fill="#fff" stroke="#222"/><path d="M10 9h2v2h-2zM10 13h2v2h-2zM14 10h2M14 14h2" stroke="#222" fill="none"/></symbol>
<symbol id="s-asm" viewBox="0 0 24 24"><path d="M3 9l3-5 8-3 5 2v7l-5 3v6l-6 4-5-2z" fill="#dedede" stroke="#555" stroke-width="1.300"/><path d="M9 11l5-3v11l-6 4z" fill="#b2b2b2" stroke="#555"/><path d="M14 5l5-2v7l-5 3z" fill="#b2b2b2" stroke="#555"/><path d="M3 9l6 2M3 15l6 2 5-3M6 4l8 1M10 3l4 2" fill="none" stroke="#666"/></symbol>
<symbol id="s-con" viewBox="0 0 24 24"><path d="M9 3l5-2 3 2v5l-4 2z" fill="#eee" stroke="#555"/><path d="M1 5l5-3 6 2v9l-5 2-6-2z" fill="#f28318" stroke="#8a4a08"/><path d="M1 13l6 2v7l-6-2zM7 15l5-2v7l-5 2z" fill="#ccc" stroke="#555"/><path d="M11 10l12 12V10L11 22z" fill="#fff" stroke="#222" stroke-width="1.300"/></symbol>
<symbol id="s-part" viewBox="0 0 24 24"><path d="M1 15l3-7 8-7 2 1v11l9 4v3l-6 3-7 1-6-2-3-4z" fill="#d4d4d4" stroke="#555" stroke-width="1.200"/><path d="M6 8l7-6v11l-7 3z" fill="#a9a9a9" stroke="#555"/><path d="M1 16l5 0M2 18c5 4 13 5 21 0" fill="none" stroke="#555"/><ellipse cx="13" cy="17" rx="4" ry="2" fill="#eee" stroke="#555"/></symbol>
<symbol id="s-nav" viewBox="0 0 24 24"><path d="M3 1h4v10l-2 1-2-1z" fill="#5b9fe6" stroke="#1f5fae"/><path d="M8 4h8M8 7h6l-7 3" stroke="#2f78c8" stroke-width="1.300" fill="none"/><path d="M5 13v11M5 18h5M13 10h9" stroke="#0c1450" stroke-width="1.400"/><path d="M13 15h3v3h4v4h-7z" fill="none" stroke="#1f5fae" stroke-width="1.300"/></symbol>
<symbol id="s-mt" viewBox="0 0 24 24"><path d="M1 6L17 1v13L1 20zM1 10l16-5M1 14l16-5M5 5v14M9 4v13M13 2v14" fill="#fff" stroke="#e69638"/><path d="M1 6L17 1" stroke="#8250c0" stroke-width="2"/><path d="M8 15l9-4 7 2v6l-7 4-9-3z" fill="#f0921e"/><path d="M17 16l7-3v6l-7 4z" fill="#2c6fe0"/><path d="M8 18l9 2v3l-9-3z" fill="#b8d5f6"/></symbol>
<symbol id="s-mach" viewBox="0 0 24 24"><path d="M1 8h14v13H1z" fill="#e3e3e3" stroke="#444" stroke-width="1.300"/><path d="M4 10h5v9H4z" fill="#8ea5c0" stroke="#444"/><path d="M11 9h4v12h-4z" fill="#b5b5b5" stroke="#444"/><path d="M13 22h8M17 19l4-5" fill="none" stroke="#555" stroke-width="2"/><path d="M7 6c1-4 4-4 7-4" stroke="#e0532a" stroke-width="2" fill="none"/><path d="M16 2l3-2 4 1v5l-3 2-4-1z" fill="#ffb53c" stroke="#c22"/></symbol>
<symbol id="s-book" viewBox="0 0 24 24"><path d="M4 6l9-5 4 2 4 1v14l-9 5-8-3z" fill="#e6e6e6" stroke="#444" stroke-width="1.300"/><path d="M4 6l4 1v15M8 7l9-5M8 7l4 1v15M12 8l9-4" fill="none" stroke="#444" stroke-width="1.200"/></symbol>
<symbol id="s-info" viewBox="0 0 24 24"><circle cx="9" cy="15" r="8.300" fill="#888" stroke="#444"/><path d="M9 10v1.500M9 13v6" stroke="#fff" stroke-width="1.600"/><path d="M9 4c6 0 11 4 11 11M9 1c8 0 14 6 14 14" fill="none" stroke="#999" stroke-width="1.200" opacity=".8"/></symbol>
<symbol id="s-web" viewBox="0 0 24 24"><path d="M.7.700h22.600v22.600H.700zM.700 4.500h22.600" fill="none" stroke="#333" stroke-width="1.300"/><path d="M15 2.500h7" stroke="#333" stroke-dasharray="1 2"/><circle cx="12" cy="14" r="7.500" fill="#2a82a5"/><path d="M7 10l4-2 1 3-3 2zM13 12l4-3 2 4-3 4zM8 16l4 1-1 4z" fill="#bfe2ec"/></symbol>
<symbol id="s-clock" viewBox="0 0 24 24"><circle cx="12" cy="12" r="11" fill="none" stroke="#444" stroke-width="1.200"/><path d="M12 4v8.500H6M12 1v2.500M12 21v2.500M1 12h2.500M20.500 12H23" stroke="#444" fill="none" stroke-width="1.200"/></symbol>
<symbol id="s-rain" viewBox="0 0 24 24"><path d="M2 1h8v22H2z" fill="url(#rainbow)"/><path d="M12 9l8 12" stroke="#111" stroke-width="3"/><path d="M20 21l1 2" stroke="#999" stroke-width="3"/><path d="M12 1l1 4 4-1-3 3 3 3-4-1-2 3-1-4-3-2 3-1z" fill="#fff"/></symbol>
<symbol id="s-mw" viewBox="0 0 24 24"><path d="M3 2h6v17H3z" fill="#5b9fe6" stroke="#1f5fae"/><path d="M9 5h14M10 9h10l-8 5M1 14h10" stroke="#2f78c8" stroke-width="1.400" fill="none"/><path d="M2 20l3 2 3-2 3 2" stroke="#d4ae2c" fill="none"/><path d="M13 9l7 12" stroke="#111" stroke-width="3"/><path d="M12 1l1 4 4-1-3 3 3 3-4-1-2 3-1-4-3-2 3-1z" fill="#fff"/></symbol>
<symbol id="s-tools" viewBox="0 0 24 24"><path d="M1.500 4H5V1h5v3h12.500v18.500h-21z" fill="#fff" stroke="#444" stroke-width="1.300"/><path d="M7 10l10 10M17 10L7 20" stroke="#6b8088" stroke-width="3"/><path d="M4 8l3 1 1-3M20 8l-3 2-2-4" stroke="#6b8088" stroke-width="2" fill="none"/></symbol>
<symbol id="s-mb" viewBox="0 0 24 24"><path d="M1 8h13v14H1z" fill="#ddd" stroke="#111" stroke-width="1.600"/><path d="M4 10h4v9H4z" fill="#b5b3d8" stroke="#111"/><path d="M10 9h4v13h-4z" fill="#fff" stroke="#111"/><path d="M14 22h8M17 19l4-5h-3" fill="none" stroke="#111" stroke-width="2"/><path d="M12 4l5-1 1-2h5v7l-9 4z" fill="#f0df5a" stroke="#9a8c1e"/><path d="M17 3c3-3 6-1 6 1" stroke="#3a9a36" stroke-width="2" fill="none"/></symbol>
<symbol id="n-folder" viewBox="0 0 14 14"><path d="M.5 1.500h5l1 1.500h7v10H.500z" fill="#f6dd8e" stroke="#8a7a48"/><path d="M7 5h4v6.500H7z" fill="#fff"/><path d="M7 5.500h4v6H7M8 8.500h3" stroke="#14145e" stroke-width="1.300" fill="none"/></symbol>
<symbol id="n-no" viewBox="0 0 14 14"><circle cx="7" cy="7" r="5.800" fill="#fff" stroke="#b8161c" stroke-width="2"/><path d="M3 11l8-8" stroke="#b8161c" stroke-width="2"/></symbol>
<symbol id="n-cav" viewBox="0 0 14 14"><path d="M0 2h4v4l4 5h6v3H7L1 9z" fill="#1b3a3a"/><path d="M4 4h10v7H8L4 6z" fill="#74d8f0"/><path d="M6 0h5v7H6z" fill="#3a4cc0"/><path d="M1 4l6 8" stroke="#3fa060" stroke-width="1.500"/></symbol>
<symbol id="d-form" viewBox="0 0 14 14"><path d="M1 1h12v12H1z" fill="#eef5e0" stroke="#4f7a1e" stroke-width="1.800"/><path d="M3 5h4M8 4h3M3 8h8M3 10.500h8" stroke="#333"/></symbol>
<symbol id="d-add" viewBox="0 0 24 24"><path d="M6 1v8M2 5h8" stroke="#1c5fb8" stroke-width="2"/><circle cx="15" cy="13" r="4.500" fill="none" stroke="#b8282c" stroke-width="1.300"/><path d="M15 5v17M7 13h16" stroke="#222"/></symbol>
<symbol id="d-torch" viewBox="0 0 24 24"><path d="M2 4l1-2 3-1 10 8 5 1 2 4-1 4-5 4-4-1-2-5z" fill="#1d45b8" stroke="#0c1c60"/><path d="M4 3l11 9" stroke="#6f9bf4" stroke-width="2"/><path d="M22 13c1 4-4 9-9 9 0-4 4-8 9-9z" fill="#f4f08a" stroke="#5d6a3a"/></symbol>
<symbol id="k-folder" viewBox="0 0 32 32"><path d="M6 3l9-2 4 2v10l6 4v12l-8 2-11-2z" fill="url(#gf)" stroke="#b08a30"/><path d="M6 3l7 2v26l-7-2z" fill="#fdf1bd" stroke="#c8a443"/></symbol>
<symbol id="k-360" viewBox="0 0 32 32"><circle cx="15" cy="17" r="13.500" fill="url(#grn)"/><path d="M7 18h17c0-11-16-11-16 0 0 8 11 9 15 3" fill="none" stroke="#fff" stroke-width="3.500"/><path d="M3 26C-2 16 22-2 29 3c2 2 0 5-1 6" fill="none" stroke="#7fcf3c" stroke-width="2"/></symbol>
<symbol id="k-nx" viewBox="0 0 32 32"><circle cx="15" cy="16" r="12" fill="url(#ball)"/><path d="M16 14c6-2 9 2 8 7-2 4-5 6-8 6-2-5 1-8 0-13z" fill="#4dc04a" opacity=".9"/><path d="M25 6c8 3 4 12-5 17-6 4-12 5-18 5l4-4M1 28l6 3" fill="none" stroke="#f0a83c" stroke-width="3"/><path d="M3 3l14-2-5 16z" fill="#d8202c" stroke="#8a0d14"/><path d="M12 17l5-16 3 4z" fill="#8a0d14"/></symbol>
</svg>

<div class="vh-100 d-flex flex-column position-relative">

<header class="titlebar d-flex align-items-center">
  <span class="nxlogo ps-1">NX</span>
  <span class="vsep me-1"></span>
  <button class="btn" aria-label="保存"><svg class="i16"><use href="#i-save"/></svg></button>
  <span class="vsep"></span>
  <button class="btn" disabled aria-label="撤销"><svg class="i16"><use href="#i-undo"/></svg></button>
  <span class="tri dim"></span>
  <span class="vsep"></span>
  <button class="btn" disabled aria-label="剪切"><svg class="i16"><use href="#i-cut"/></svg></button>
  <button class="btn" disabled aria-label="复制"><svg class="i16"><use href="#i-copy"/></svg></button>
  <button class="btn" disabled aria-label="粘贴"><svg class="i16"><use href="#i-paste"/></svg></button>
  <button class="btn" disabled aria-label="定位"><svg class="i18"><use href="#i-tgt"/></svg></button>
  <span class="vsep"></span>
  <button class="btn" aria-label="创建工序"><svg class="i16"><use href="#i-op"/></svg></button>
  <span class="tri"></span>
  <span class="vsep"></span>
  <button class="btn" aria-label="触控"><svg class="i16"><use href="#i-pen"/></svg></button>
  <span class="vsep"></span>
  <button class="btn d-flex align-items-center fs11"><svg class="i16 me-1"><use href="#i-wins"/></svg>切换窗口</button>
  <button class="btn d-flex align-items-center fs11"><svg class="i16 me-1"><use href="#i-win"/></svg>窗口<span class="tri ms-1"></span></button>
  <svg width="8" height="8"><path d="M0 1h8" stroke="#222"/><path d="M1 4h6L4 7z" fill="#222"/></svg>
  <div class="flex-grow-1 text-center ps-5"><span class="ps-5">NX - 加工</span></div>
  <span class="siemens me-2">SIEMENS</span>
  <div class="d-flex ps-1">
    <button class="btn" aria-label="最小化"><svg width="23" height="16"><path d="M7 13h8" stroke="#333" stroke-width="2"/></svg></button>
    <button class="btn" aria-label="还原"><svg width="22" height="16"><path d="M5.500 7.500h8v5h-8zM8.500 7V3.500h8v5H14" fill="none" stroke="#333" stroke-width="1.400"/></svg></button>
    <button class="btn" aria-label="关闭"><svg width="25" height="16"><path d="M6 3l10 10M16 3L6 13" stroke="#333" stroke-width="2"/></svg></button>
  </div>
</header>

<div class="tabrow d-flex align-items-center">
  <nav class="nav flex-nowrap text-nowrap">
    <a class="nav-link filetab" href="#">文件(F)</a>
    <a class="nav-link active" href="#">主页</a>
    <a class="nav-link" href="#">几何体</a>
    <a class="nav-link" href="#">分析</a>
    <a class="nav-link" href="#">视图</a>
    <a class="nav-link" href="#">装配</a>
    <a class="nav-link" href="#">渲染</a>
    <a class="nav-link" href="#">工具</a>
    <a class="nav-link" href="#">应用模块</a>
    <a class="nav-link" href="#">内部</a>
  </nav>
  <label class="findbox ms-auto d-flex align-items-center"><input class="fs11" type="text" placeholder="查找命令" aria-label="查找命令"><svg class="i18 ms-1"><use href="#i-mag"/></svg></label>
  <button class="btn mx-1 px-1" aria-label="全屏"><svg class="i16"><use href="#i-max4"/></svg></button>
  <button class="btn px-1" aria-label="折叠"><svg width="16" height="16"><path d="M0 12l8-8 8 8" fill="none" stroke="#333"/></svg></button>
  <button class="btn px-1" aria-label="帮助"><svg class="i16"><use href="#i-help"/></svg></button>
  <button class="btn d-flex align-items-center ms-1 fs11"><svg class="i16 me-1"><use href="#i-hat"/></svg>教程</button>
  <svg class="ms-1 me-1" width="24" height="16"><circle cx="14" cy="8" r="7" fill="#7c7c80"/></svg>
</div>

<section class="ribbon d-flex">
  <div class="rgroup g-ins">
    <div class="rbody ps-2">
      <button class="btn rbtn" style="width:54px"><svg class="i32"><use href="#i-tool"/></svg><span class="cap">创建刀具</span></button>
      <button class="btn rbtn" style="width:62px"><svg class="i32"><use href="#i-geom"/></svg><span class="cap">创建几何体</span></button>
      <button class="btn rbtn" style="width:55px"><svg class="i32"><use href="#i-op"/></svg><span class="cap">创建工序</span></button>
      <div class="d-flex flex-column stackcol">
        <button class="btn" aria-label="创建程序"><svg class="i24"><use href="#i-tile"/></svg></button>
        <button class="btn" aria-label="创建方法"><svg class="i24"><use href="#i-wave"/></svg></button>
      </div>
    </div>
    <div class="rfoot fs11"><span>插入</span><span class="tri"></span></div>
  </div>
  <div class="rgroup g-op">
    <div class="rbody justify-content-center"><button class="btn rbtn"><svg class="i32"><use href="#i-prop"/></svg><span class="cap">属性</span><span class="tri"></span></button></div>
    <div class="rfoot fs11"><span>操作</span><span class="tri"></span></div>
  </div>
  <div class="rgroup g-path">
    <div class="rbody ps-2">
      <button class="btn rbtn" style="width:53px" disabled><svg class="i32"><use href="#i-gen"/></svg><span class="cap">生成刀轨</span></button>
      <button class="btn rbtn" style="width:53px"><svg class="i32"><use href="#i-check"/></svg><span class="cap">过切检查</span></button>
      <button class="btn rbtn" style="width:53px" disabled><svg class="i32"><use href="#i-conf"/></svg><span class="cap">确认刀轨</span></button>
      <div class="ms-auto d-flex flex-column align-items-center layercol me-3">
        <button class="btn" aria-label="上移"><svg class="i14"><use href="#i-upg"/></svg></button>
        <button class="btn" aria-label="图层"><svg class="i16"><use href="#i-stack"/></svg></button>
        <button class="btn" aria-label="下移"><svg class="i14"><use href="#i-dng"/></svg></button>
      </div>
      <button class="btn rbtn me-1"><span class="morebox"><svg class="i18"><use href="#i-more1"/></svg></span><span class="cap">更多</span><span class="tri"></span></button>
    </div>
    <div class="rfoot fs11"><span></span><span class="tri"></span></div>
  </div>
  <div class="rgroup g-anim">
    <div class="rbody anim">
      <button class="btn d-flex" aria-label="后退"><svg class="i24"><use href="#i-cback"/></svg></button>
      <button class="btn d-flex" aria-label="暂停"><svg class="i24"><use href="#i-cpause"/></svg></button>
      <button class="btn d-flex" aria-label="播放"><svg class="i24"><use href="#i-cplay"/></svg></button>
      <button class="btn d-flex align-items-center" aria-label="首步"><svg class="i24"><use href="#i-cfirst"/></svg><span class="tri ms-2"></span></button>
      <div class="selwrap"><select class="plainselect d-block" aria-label="速度"><option>5</option></select><span class="tri"></span></div>
      <button class="btn d-flex align-items-center" aria-label="末步"><svg class="i24"><use href="#i-clast"/></svg><span class="tri ms-2"></span></button>
    </div>
    <div class="rfoot fs11"><span>刀轨动画</span><span class="tri"></span></div>
  </div>
  <div class="rgroup g-ipw">
    <div class="rbody ps-1">
      <button class="btn rbtn" style="width:62px" disabled><svg class="i32"><use href="#i-ipw"/></svg><span class="cap">显示 IPW</span></button>
      <button class="btn rbtn" style="width:63px"><svg class="i32"><use href="#i-3d"/></svg><span class="cap">显示 3D IPW</span><span class="tri"></span></button>
    </div>
    <div class="rfoot fs11"><span>IPW</span><span class="tri"></span></div>
  </div>
  <div class="rgroup g-gc">
    <div class="rbody flex-column ps-1 pt-1" style="gap:6px">
      <div class="d-flex align-items-center">
        <button class="btn cell" aria-label="检查"><svg class="i16"><use href="#g-chk"/></svg></button>
        <button class="btn cell" aria-label="模板"><svg class="i16"><use href="#g-box"/></svg></button>
        <button class="btn cell" aria-label="结构"><svg class="i16"><use href="#g-tree"/></svg></button>
        <button class="btn cell" aria-label="表格"><svg class="i16"><use href="#g-grid"/></svg></button>
        <span class="vsep ms-1"></span>
        <button class="btn cell" aria-label="装夹"><svg class="i16"><use href="#g-hand"/></svg></button>
      </div>
      <div class="d-flex align-items-center">
        <button class="btn cell" aria-label="注释"><svg class="i16"><use href="#g-msg"/></svg></button>
        <button class="btn cell" aria-label="文档"><svg class="i16"><use href="#g-doc"/></svg></button>
        <span class="vsep ms-1"></span>
        <button class="btn cell" aria-label="工序表"><svg class="i16"><use href="#g-ml"/></svg></button>
        <button class="btn cell" aria-label="工序工具"><svg class="i16"><use href="#g-mw"/></svg></button>
        <button class="btn cell" aria-label="工时"><svg class="i16"><use href="#g-mc"/></svg></button>
        <button class="btn cell" aria-label="后处理"><svg class="i16"><use href="#g-mach"/></svg></button>
      </div>
    </div>
    <div class="rfoot fs11"><span>加工工具 - GC工具箱</span><span class="tri"></span></div>
  </div>
  <div class="rgroup g-feat">
    <div class="rbody ps-2">
      <button class="btn rbtn" style="width:54px"><svg class="i32"><use href="#i-find"/></svg><span class="cap">查找特征</span></button>
      <button class="btn rbtn" style="width:70px"><svg class="i32"><use href="#i-fproc"/></svg><span class="cap">创建特征工艺</span></button>
      <button class="btn rbtn ms-auto me-1"><span class="morebox"><svg class="i18"><use href="#i-more2"/></svg></span><span class="cap">更多</span><span class="tri"></span></button>
    </div>
    <div class="rfoot fs11"><span>特征</span><span class="tri"></span></div>
  </div>
  <span class="tri ms-auto align-self-end me-1 mb-2"></span>
</section>

<div class="selbar d-flex align-items-center">
  <div class="selleft d-flex align-items-center ps-2">
    <button class="btn d-flex align-items-center ps-1"><svg class="me-1" width="10" height="10"><path d="M0 .500h10M0 5h10M0 9.500h10" stroke="#333"/></svg><span class="fs11 px-1">菜单(<u>M</u>)</span><span class="tri"></span></button>
    <span class="vsep mx-2"></span>
    <button class="btn tcell on" aria-label="程序顺序视图"><svg class="i18"><use href="#t-a"/></svg></button>
    <button class="btn tcell" aria-label="机床视图"><svg class="i18"><use href="#t-b"/></svg></button>
    <button class="btn tcell" aria-label="几何视图"><svg class="i18"><use href="#t-c"/></svg></button>
    <button class="btn tcell" aria-label="加工方法视图"><svg class="i18"><use href="#t-d"/></svg></button>
    <span class="vsep mx-2"></span>
    <button class="btn tcell on" aria-label="刀轨"><svg class="i18"><use href="#t-e"/></svg></button>
    <button class="btn tcell" aria-label="工件"><svg class="i18"><use href="#t-f"/></svg></button>
    <span class="vsep mx-2"></span>
    <div class="selwrap ms-1"><select class="plainselect filterbox d-block" aria-label="选择过滤器"><option></option></select><span class="tri dim"></span></div>
  </div>
  <div class="d-flex align-items-center">
    <button class="btn tcell" aria-label="区域"><svg class="i18"><use href="#t-hex"/></svg></button>
    <button class="btn tcell" aria-label="实体点"><svg class="i16"><use href="#t-cube"/></svg></button>
    <button class="btn tcell" aria-label="矩形点"><svg class="i16"><use href="#t-sq"/></svg></button>
    <span class="tarr"><span class="tri"></span></span>
    <button class="btn tcell" aria-label="隐藏体"><svg class="i16"><use href="#t-cg"/></svg></button>
    <button class="btn tcell" aria-label="截面"><svg class="i16"><use href="#t-co"/></svg></button>
    <span class="vsep mx-2"></span>
    <button class="btn tcell" aria-label="缩放"><svg class="i18"><use href="#t-wz"/></svg></button>
    <button class="btn tcell" aria-label="平移"><svg class="i18"><use href="#t-wm"/></svg></button>
    <button class="btn tcell" aria-label="旋转"><svg class="i18"><use href="#t-wr"/></svg></button>
    <button class="btn tcell ms-1" aria-label="着色"><svg class="i18"><use href="#t-solid"/></svg></button>
    <button class="btn tcell" aria-label="显示设置"><svg class="i16"><use href="#t-cgear"/></svg></button>
    <button class="btn tcell" aria-label="适合窗口"><svg class="i18"><use href="#t-wf"/></svg></button>
    <span class="tarr"><span class="tri"></span></span>
    <button class="btn tcell" aria-label="渲染样式"><svg class="i18"><use href="#t-brk"/></svg></button>
    <span class="tarr"><span class="tri"></span></span>
    <button class="btn tcell" aria-label="方位"><svg class="i18"><use href="#t-cyl"/></svg></button>
    <span class="tarr"><span class="tri"></span></span>
    <button class="btn tcell" aria-label="显示隐藏"><svg class="i18"><use href="#t-eye"/></svg></button>
    <span class="tarr"><span class="tri"></span></span>
    <span class="vsep ms-2"></span>
  </div>
  <span class="tri ms-auto me-1"></span>
</div>

<main class="workarea d-flex">
  <aside class="sidebar d-flex flex-column flex-shrink-0">
    <button class="btn gearbtn" aria-label="资源条选项"><svg class="i14"><use href="#i-gear"/></svg></button>
    <button class="btn" aria-label="装配导航器"><svg class="i24"><use href="#s-asm"/></svg></button>
    <button class="btn" aria-label="约束导航器"><svg class="i24"><use href="#s-con"/></svg></button>
    <button class="btn" aria-label="部件导航器"><svg class="i24"><use href="#s-part"/></svg></button>
    <button class="btn on" aria-label="工序导航器"><svg class="i24"><use href="#s-nav"/></svg></button>
    <button class="btn" aria-label="加工特征"><svg class="i24"><use href="#s-mt"/></svg></button>
    <button class="btn" aria-label="机床导航器"><svg class="i24"><use href="#s-mach"/></svg></button>
    <button class="btn" aria-label="重用库"><svg class="i24"><use href="#s-book"/></svg></button>
    <button class="btn far" aria-label="HD3D"><svg class="i24"><use href="#s-info"/></svg></button>
    <button class="btn far" aria-label="浏览器"><svg class="i24"><use href="#s-web"/></svg></button>
    <button class="btn far" aria-label="历史记录"><svg class="i24"><use href="#s-clock"/></svg></button>
    <button class="btn" aria-label="系统材料"><svg class="i24"><use href="#s-rain"/></svg></button>
    <button class="btn" aria-label="加工向导"><svg class="i24"><use href="#s-mw"/></svg></button>
    <button class="btn" aria-label="角色"><svg class="i24"><use href="#s-tools"/></svg></button>
    <button class="btn" aria-label="机床库"><svg class="i24"><use href="#s-mb"/></svg></button>
  </aside>

  <section class="navpanel d-flex flex-column flex-shrink-0 bg-white">
    <div class="d-flex justify-content-between align-items-center navhead">
      <span>工序导航器 - 程序顺序</span>
      <button class="btn" aria-label="最大化"><svg width="13" height="12"><path d="M1 1h11v10H1zM1 2h11" fill="none" stroke="#111" stroke-width="1.300"/></svg></button>
    </div>
    <div class="navframe d-flex flex-column">
      <div class="navscroll">
        <table class="navtable">
          <colgroup><col style="width:200px"><col style="width:100px"><col></colgroup>
          <thead><tr><th>名称</th><th>换刀</th><th>刀</th></tr></thead>
          <tbody id="ops">
            <tr><td><div class="ps-1">NC_PROGRAM</div></td><td></td><td></td></tr>
            <tr><td><div class="d-flex align-items-center"><span class="twig first"></span><svg class="i14 me-1"><use href="#n-folder"/></svg>未用项</div></td><td></td><td></td></tr>
            <tr><td><div class="d-flex align-items-center"><span class="twig"></span><svg width="16" height="16"><path d="M7 0v11M7 13v2" stroke="#f0be4a" stroke-width="2"/></svg><svg class="i14 me-1"><use href="#n-folder"/></svg>PROGRAM</div></td><td></td><td></td></tr>
            <tr class="picked"><td><div class="d-flex align-items-center"><span class="twig last"></span><span class="opicons"><svg class="i14"><use href="#n-no"/></svg><svg class="i14"><use href="#n-cav"/></svg></span><span class="picklabel flex-grow-1 ps-1">CAVITY_MILL</span></div></td><td></td><td><svg width="12" height="19"><path d="M5 4l6 6-6 6" stroke="#235" fill="none"/></svg></td></tr>
          </tbody>
        </table>
      </div>
      <div class="hbar px-1"><span class="tri lf ms-1"></span><div class="thumb ms-2" style="width:100px;height:15px"><span class="grip"></span></div><span class="tri rt ms-auto me-1"></span></div>
    </div>
    <div class="splitbar"></div>
    <button class="fold">相关性<svg class="chev"><path d="M1 1l4.500 7L10 1"/></svg></button>
    <button class="fold">细节<svg class="chev"><path d="M1 1l4.500 7L10 1"/></svg></button>
  </section>

  <section class="d-flex flex-column flex-grow-1">
    <div class="viewtab d-flex align-items-center ps-1"><svg width="18" height="16" class="me-1"><path d="M1 8l8-7 8 7M3.500 7v8.500h4V10h3v5.500h4V7M3.500 5V2" fill="none" stroke="#333"/></svg><a href="#" class="text-reset text-decoration-none">欢迎页面</a></div>
    <div class="canvas3d flex-grow-1 position-relative">
      <svg class="triad axis" width="180" height="210" font-size="14">
        <g fill="none" stroke="#3a38d0"><path d="M10 90l52-16v62M10 90l42 20v61l52-15-42-19"/></g>
        <path d="M2 152h15M10 152v8" stroke="#1010a8" stroke-width="2"/>
        <path d="M10 40v22" stroke="#8a8ae0" stroke-width="2"/>
        <path d="M10 70v80" stroke="#0c3fc0" stroke-width="2"/>
        <path d="M10 29l3 14H7z" fill="#0c0ca8"/><path d="M10 57l4 17H6z" fill="#1046c0"/>
        <path d="M10 152l62-20" stroke="#2e8a34" stroke-width="2"/><path d="M90 127l-17 1 3 7z" fill="#3fae46" stroke="#2e8a34"/>
        <path d="M89 127l12-4" stroke="#2020c8"/><path d="M113 120l-14 1 2 6z" fill="#0a0ac8"/>
        <path d="M10 152l52 24" stroke="#c22a2a" stroke-width="2"/><path d="M75 182l-12-9-3 6z" fill="#d23030" stroke="#d23030"/>
        <path d="M75 182l8 4" stroke="#2020c8"/><path d="M94 191l-10-7-2 5z" fill="#0a0ac8" stroke="#0a0ac8"/>
        <text x="6" y="27" fill="#2a34d8">Z</text><text x="15" y="54" fill="#3464e0">ZM</text>
        <text x="72" y="123" fill="#3f9a44">YM</text><text x="114" y="123" fill="#2a34d8">Y</text>
        <text x="58" y="196" fill="#cc4444">XM</text><text x="94" y="198" fill="#2a34d8">X</text>
      </svg>
      <svg class="viewcube axis" width="56" height="74" font-size="11">
        <path d="M12 26l19-9 15 8v34l-16 8-18-7z" fill="#cfd0d1" stroke="#a9abac"/><path d="M12 26l18 9 16-10M30 35v32" fill="none" stroke="#a9abac"/>
        <path d="M9 52l30-11" stroke="#9ccaa4" stroke-width="3"/><path d="M44 40l-10 0 3 6z" fill="#9ccaa4"/>
        <path d="M9 50V20" stroke="#0c34c0" stroke-width="2"/><path d="M9 11l3 12H6z" fill="#0c34c0"/>
        <path d="M9 53l20 8" stroke="#c02424" stroke-width="3"/><path d="M37 65l-12-1 4-6z" fill="#c02424"/>
        <circle cx="9" cy="52" r="4" fill="#ddd" stroke="#888"/>
        <text x="5" y="9" fill="#3a58e0">Z</text><text x="43" y="43" fill="#5cb068">Y</text><text x="35" y="72" fill="#d44040">X</text>
      </svg>
    </div>
  </section>
</main>

<footer class="statusbar d-flex align-items-center justify-content-end"><svg class="i16"><use href="#i-max4"/></svg></footer>

<div class="taskbar d-flex align-items-center">
  <button class="btn ms-2" aria-label="开始"><svg width="38" height="38" viewBox="0 0 38 38"><circle cx="19" cy="19" r="17.500" fill="url(#orb)" stroke="#8fb4d0"/><path d="M9 12c3-2 6-2 9 0l-1 7c-3-2-6-2-9 0z" fill="#e8582a"/><path d="M20 12c3 2 6 2 9 0l-1 7c-3 2-6 2-9 0z" fill="#86c23c"/><path d="M8 21c3-2 6-2 9 0l-1 7c-3-2-6-2-9 0z" fill="#3f9ae0"/><path d="M18 22c3 2 6 2 9 0l-1 7c-3 2-6 2-9 0z" fill="#f6c62e"/></svg></button>
  <button class="btn ms-4 ps-1" aria-label="AutoCAD 2010"><svg width="32" height="34"><path d="M2 8h28v24H2z" fill="#f3f3f3"/><path d="M4 21L8 1h4l8 18-4 2-3-4-4 1-1 3z" fill="#c2161c" stroke="#7d0c10"/><g fill="#c2161c" font-family="Liberation Sans" font-weight="bold" font-size="8"><text x="20" y="18">20</text><text x="20" y="26">10</text></g></svg></button>
  <button class="btn ms-4 ps-1" aria-label="E"><svg width="32" height="32"><path d="M0 0h32v32H0z" fill="#720c10"/><path d="M9 5h15v5H14v4h9v4h-9v4h10v5H9z" fill="#fff"/></svg></button>
  <div class="d-flex tasks">
    <button class="btn task"><svg><use href="#k-360"/></svg>【新提醒】发表...</button>
    <button class="btn task dark gapped"><svg><use href="#k-folder"/></svg>PanDownload</button>
    <button class="btn task dark"><svg><use href="#k-folder"/></svg>BaiduYunDownl...</button>
    <button class="btn task gapped"><svg><use href="#k-nx"/></svg>NX - 加工</button>
  </div>
  <div class="d-flex align-items-center ms-auto">
    <span class="ticon"><svg class="i16"><path d="M3 1h11v14H3z" fill="#fff"/><path d="M6 4h6M6 7h6M6 10h6" stroke="#77a"/><path d="M1 8l4 6 5-13" stroke="#d22a20" stroke-width="2" fill="none"/></svg></span>
    <span class="ticon"><svg class="i16"><path d="M0 6h16v9H0z" fill="#d9d9d9"/><path d="M2 8.500h12M2 10.500h12M4 12.500h8" stroke="#444" stroke-dasharray="1 1"/><path d="M8 6c0-4 4-1 6-4" stroke="#ddd" fill="none"/></svg></span>
    <span class="ticon"><svg class="i16"><circle cx="8" cy="8" r="7.500" fill="#1f6fd6" stroke="#a9cdf4"/><path d="M5.500 6.200c0-3.500 5-3.500 5 0 0 2-2.500 2-2.500 4M8 11.500v1.500" stroke="#fff" stroke-width="1.600" fill="none"/></svg></span>
    <span class="ticon"><svg class="i16"><path d="M7 0h6v4H7zM4 2h6v4H4z" fill="#17345a" stroke="#fff"/><path d="M4 11h7l-3.500 3.500z" fill="#fff"/></svg></span>
    <span class="ticon"><svg class="i16"><circle cx="8" cy="8" r="7.500" fill="#2c8fd8" stroke="#fff"/><path d="M3 5l2 3 3-4M5 8l-1 4M9 6v4c0 2 3 2 4 0V5" stroke="#fff" stroke-width="1.500" fill="none"/></svg></span>
    <span class="ticon"><svg class="i16" viewBox="0 0 32 32"><use href="#k-360"/></svg></span>
    <span class="ticon"><svg class="i16"><path d="M2 1h4v3H2zM1 4h6v8H1z" fill="#bbb"/><circle cx="11" cy="11" r="5" fill="#2aa336"/><path d="M8.500 11l2 2 3-4" stroke="#fff" stroke-width="1.500" fill="none"/></svg></span>
    <span class="ticon"><svg class="i16"><path d="M1 6h3l4-4v12l-4-4H1z" fill="#fff"/><path d="M10 5c2 2 2 4 0 6M12 3c3 3 3 7 0 10" stroke="#fff" fill="none"/></svg></span>
    <span class="ticon"><svg class="i16"><path d="M5 5h10v8H5zM7 15.500h7M1 2h4v5H1zM3 7v7h2" stroke="#fff" stroke-width="1.400" fill="none"/></svg></span>
  </div>
  <div class="clock"><div>16:21</div><div>2019/9/1</div></div>
  <button class="btn desk" aria-label="显示桌面"></button>
</div>

<!-- customise-dialog window floating over the work area -->
<div class="dlg" role="dialog" aria-label="定制对话框">
  <div class="dlgtitle d-flex align-items-center">
    <svg class="i14"><use href="#i-gear"/></svg><span class="ps-2 flex-grow-1">定制对话框</span>
    <button class="btn text-white me-2" aria-label="重置"><svg width="14" height="14"><path d="M10 3A5 5 0 1 1 3 4M6 2H2v4" fill="none" stroke="#fff" stroke-width="2"/></svg></button>
    <button class="btn text-white" aria-label="关闭"><svg width="14" height="14"><path d="M2 2l10 10M12 2L2 12" stroke="#fff" stroke-width="2"/></svg></button>
  </div>

  <div class="sect topmost">
    <button class="secthead">要添加的项<svg class="chev"><path d="M1 8l4.500-7L10 8"/></svg></button>
    <div class="lrow kindrow"><label for="kind">对话框项类型</label>
      <div class="selwrap"><select id="kind" class="plainselect kind d-block"><option>可定制项</option></select><svg class="i14 kindico"><use href="#d-form"/></svg><span class="tri"></span></div></div>
    <div class="lrow"><label for="term">搜索</label><input id="term" class="term" type="text"></div>
    <div class="listframe itemlist">
      <div class="d-flex">
        <ul class="rows flex-grow-1">
          <li>初始封闭区域: 61</li><li>初始开放区域: 62</li><li>退刀: 63</li><li>最终: 64</li><li>起点/钻点: 65</li><li>安全距离: 66</li><li>区域之间: 67</li><li>区域内: 68</li><li>初始和最终: 69</li>
        </ul>
        <div class="vbar py-2"><span class="tri up"></span><div class="thumb v" style="width:15px;height:15px;margin-top:95px"></div><span class="tri mt-auto"></span></div>
      </div>
      <div class="hbar pe-3"><span class="tri lf ms-2"></span><div class="thumb ms-2" style="width:92px;height:15px"><span class="grip"></span></div><span class="tri rt ms-auto me-2"></span></div>
    </div>
    <div class="lrow"><span>添加至对话框</span><button class="btn sqbtn" aria-label="添加至对话框"><svg class="i24"><use href="#d-add"/></svg></button></div>
  </div>

  <div class="sect">
    <button class="secthead">已用项<svg class="chev"><path d="M1 8l4.500-7L10 8"/></svg></button>
    <div class="d-flex treewrap">
      <div class="listframe d-flex flex-grow-1">
        <ul class="rows tree flex-grow-1">
          <li class="bg-white"><span class="node first"></span><span class="picklabel flex-grow-1">最小化进刀数: 51</span></li>
          <li><span class="node"><i class="plus"></i></span>组<span class="co">：</span>几何体: 1017</li>
          <li><span class="node"><i class="plus"></i></span>组<span class="co">：</span>工具: 1019</li>
          <li><span class="node"></span>刀轴: 47</li>
          <li><span class="node"><i class="plus"></i></span>组<span class="co">：</span>刀轨设置: 1017</li>
          <li><span class="node"><i class="plus"></i></span>组<span class="co">：</span>机床控制: 1019</li>
          <li><span class="node"><i class="plus"></i></span>组<span class="co">：</span>程序: 1019</li>
          <li><span class="node"><i class="plus"></i></span>组<span class="co">：</span>描述: 1019</li>
          <li><span class="node"><i class="plus"></i></span>组<span class="co">：</span>选项: 1019</li>
          <li><span class="node"><i class="plus"></i></span>组<span class="co">：</span>操作: 1017</li>
        </ul>
        <div class="vbar py-2"><span class="tri up"></span><div class="thumb v" style="width:15px;height:144px;margin-top:7px"><span class="grip"></span></div><span class="tri mt-auto"></span></div>
      </div>
      <div class="d-flex flex-column ms-1" style="gap:2px">
        <button class="btn sqbtn sm24" aria-label="移除"><svg class="i16"><path d="M1 1l14 14M15 1L1 15" stroke="#222"/></svg></button>
        <button class="btn sqbtn sm24" disabled aria-label="上移"><svg class="i16"><path d="M8 1.500l6.500 6h-3v7h-7v-7h-3z" fill="none" stroke="#aaa"/></svg></button>
        <button class="btn sqbtn sm24" aria-label="下移"><svg class="i16"><path d="M8 14.500l6.500-6h-3v-7h-7v7h-3z" fill="none" stroke="#333"/></svg></button>
      </div>
    </div>
    <div class="lrow" style="color:#aaa"><span>定制子对话框</span><button class="btn sqbtn" disabled aria-label="定制子对话框"><svg width="22" height="20"><path d="M0 0h22v20H0z" fill="#c6c8c4"/><path d="M2 7h9M12 7V5h7M3 15v-3h16v3" fill="none" stroke="#979997"/></svg></button></div>
  </div>

  <div class="sect closed"><button class="secthead"><u>重置</u><svg class="chev"><path d="M1 1l4.500 7L10 1"/></svg></button></div>

  <div class="sect">
    <button class="secthead">预览<svg class="chev"><path d="M1 8l4.500-7L10 8"/></svg></button>
    <div class="lrow pt-1"><span>显示对话框</span><button class="btn sqbtn" aria-label="显示对话框"><svg class="i24"><use href="#d-torch"/></svg></button></div>
  </div>

  <div class="d-flex justify-content-end dlgfoot">
    <button class="btn okbtn">确定</button><button class="btn nobtn">取消</button>
  </div>
</div>

<div class="wmark d-flex align-items-center">
  <svg width="72" height="82" viewBox="0 0 74 84" class="me-2"><path d="M37 1l35 20v41L37 83 2 62V21z" fill="#4db4e6" opacity=".6"/><path d="M37 1L2 21v20C12 18 30 8 55 11z" fill="#d6ecf6" opacity=".6"/><path d="M55 11c8 20-2 36-18 52l35-22M2 46c4 20 20 28 50 28" stroke="#fff" fill="none" opacity=".7"/><path d="M37 21l18 10v23L37 65 19 54V31z" fill="#6bbfea" stroke="#fff" stroke-width="4" opacity=".8"/><path d="M19 32l18 11 18-11M37 43v20" stroke="#fff" stroke-width="2" fill="none" opacity=".9"/></svg>
  <div><div class="big">3D世界网</div><div class="url">WWW.3DSJW.COM</div></div>
</div>
</div>

<script src="https://cdn.jsdelivr.net/npm/bootstrap@5.3.0/dist/js/bootstrap.bundle.min.js"></script>
<script>
// pad the operation list with blank ruled rows
const ops = document.getElementById('ops');
for (let i = 0; i < 60; i++) ops.insertAdjacentHTML('beforeend', '<tr><td></td><td></td><td></td></tr>');
</script>
</body>
</html>
